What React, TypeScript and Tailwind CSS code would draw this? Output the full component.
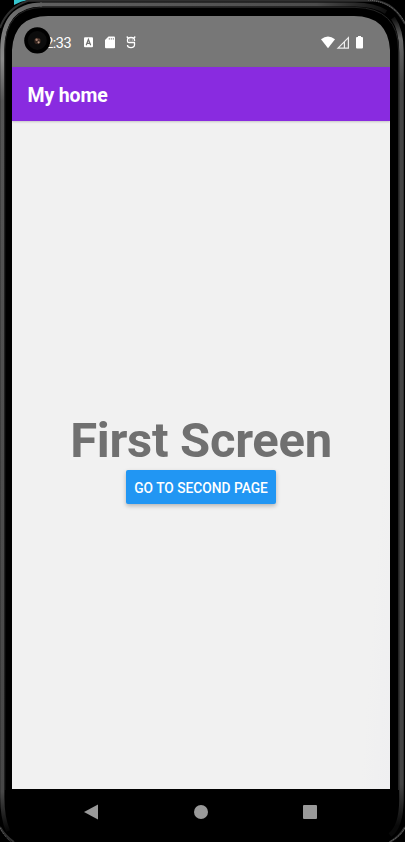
import React from "react";

function DeviceFrame() {
  return (
    <svg className="pointer-events-none absolute inset-0" width="405" height="842" viewBox="0 0 405 842" fill="none">
      <defs>
        <linearGradient id="leftRim" gradientUnits="userSpaceOnUse" x1="0" y1="0" x2="0" y2="842">
          <stop offset="0" stopColor="#606060" />
          <stop offset="0.03" stopColor="#777" />
          <stop offset="0.07" stopColor="#8a8a8a" />
          <stop offset="0.12" stopColor="#555" />
          <stop offset="0.94" stopColor="#484848" />
          <stop offset="0.985" stopColor="#080808" />
        </linearGradient>
        <linearGradient id="topRim" gradientUnits="userSpaceOnUse" x1="40" y1="0" x2="385" y2="0">
          <stop offset="0" stopColor="#606060" />
          <stop offset="0.8" stopColor="#4c4c4c" />
          <stop offset="1" stopColor="#111" />
        </linearGradient>
        <linearGradient id="rightRim" gradientUnits="userSpaceOnUse" x1="0" y1="18" x2="0" y2="842">
          <stop offset="0" stopColor="#111" />
          <stop offset="0.025" stopColor="#686868" />
          <stop offset="0.08" stopColor="#444" />
          <stop offset="0.93" stopColor="#444" />
          <stop offset="0.98" stopColor="#090909" />
        </linearGradient>
      </defs>
      <path fillRule="evenodd" fill="#000" d="M0 0H405V770H390V50Q388 16 354 16H48Q14 16 12 50V770H0Z" />
      <path d="M14 0H28Q21 1 14 5Z" fill="#36c5ce" />
      <path d="M0 28Q7 8 28 .8H376Q394 3 405 24M0 827Q5 836 14 842M405 827Q400 836 390 842" stroke="#303030" strokeWidth="2" />
      <path d="M8 831Q2.3 818 2.3 797V50Q2.3 5 42 4.5" stroke="url(#leftRim)" strokeWidth="4.2" />
      <path d="M40 4.5H355Q374 4.5 386 12" stroke="url(#topRim)" strokeWidth="4" />
      <path d="M393 18Q401.5 30 401.5 52V800Q401 827 390 835" stroke="url(#rightRim)" strokeWidth="4.5" />
      <path d="M4.8 790V50Q4.8 8 43 7.4H355Q398.5 8 398.5 50V790" stroke="#242424" strokeWidth="1" />
      <path d="M368 0Q394 2 405 23M0 828Q4 836 11 842M405 828Q400 837 389 842" stroke="#888" strokeWidth=".8" strokeDasharray="1 1" />
    </svg>
  );
}

function StatusBar() {
  return (
    <div className="relative h-[51px] shrink-0 bg-[#777]">
      <span className="absolute left-[25.5px] top-[18.5px] text-[14.5px] leading-[18px] tracking-[-0.5px] text-white">12:33</span>
      <svg className="absolute inset-0" width="378" height="51" viewBox="12 16 378 51" fill="#fff">
        <rect x="84" y="37.3" width="9" height="10" rx="1" />
        <path d="M86.2 45.2 88.4 39.5 90.7 45.2M87 43.3H90" fill="none" stroke="#707070" strokeWidth="1.2" />
        <path d="M108.5 36.5H114Q115 36.5 115 37.5V47.3Q115 48.3 114 48.3H106Q105 48.3 105 47.3V40Z" />
        <path d="M109.3 38V39.7M111.3 38V39.7M113.3 38V39.7" stroke="#888" strokeWidth=".9" />
        <path d="M134.5 41V40Q134.5 37.5 131 37.5T127.5 40V41.3Q127.5 42.5 129 42.5H135M134.5 42.5V44.8Q134.5 47.6 131 47.6Q127.5 47.6 127.5 45M126.8 36.5 128.2 38.3M135.2 36.5 133.8 38.3" fill="none" stroke="#fff" strokeWidth="1.3" />
        <path d="M129 40H130.4M131.7 40H133.1" stroke="#ddd" strokeWidth=".9" />
        <path d="M321 39.3Q328 33.5 335 39.3L328 48.2Z" />
        <path d="M338 48.2 348.4 37.7V48.2ZM344.4 42V48" fill="none" stroke="#eee" strokeWidth="1.2" />
        <path d="M356 38Q356 37 357 37H358V36H361V37H362Q363 37 363 38V47.5Q363 48.5 362 48.5H357Q356 48.5 356 47.5Z" />
      </svg>
    </div>
  );
}

function Camera() {
  return (
    <svg className="absolute left-6 top-[27px]" width="27" height="27" viewBox="0 0 27 27">
      <circle cx="13.3" cy="13.4" r="13.1" fill="#000" />
      <circle cx="13.3" cy="13.4" r="9.5" fill="#0c0c0c" />
      <circle cx="13.5" cy="14" r="3.2" fill="#35251f" />
      <circle cx="12.6" cy="12.8" r="1.2" fill="#a98270" />
      <circle cx="14.6" cy="15.3" r="1.1" fill="#b99a88" />
      <circle cx="15" cy="12.8" r=".8" fill="#62483e" />
    </svg>
  );
}

export default function App() {
  return (
    <div className="relative flex h-[842px] w-[405px] flex-col overflow-hidden bg-black pl-3 pr-[15px] pt-4 font-[Roboto,sans-serif]">
      <StatusBar />
      <header className="z-0 flex h-[54px] shrink-0 items-center bg-[#892be0] pl-[15.5px] pt-[4px] shadow-[0_1px_2px_rgba(0,0,0,0.18)]">
        <h1 className="text-[19.5px] font-bold leading-6 tracking-[-0.15px] text-white">My home</h1>
      </header>
      <main className="flex h-[668px] shrink-0 flex-col items-center bg-[linear-gradient(94deg,#f1f1f1_93%,#efeff1_100%)] pt-[290px]">
        <h2 className="whitespace-nowrap text-[49px] font-bold leading-[59px] tracking-[-0.3px] text-[#707070]">First Screen</h2>
        <button className="h-[34px] w-[150px] whitespace-nowrap rounded-[2px] bg-[#2196f3] pt-[2px] text-[13.75px] font-medium text-white shadow-[0_2px_4px_rgba(0,0,0,0.25)]">GO TO SECOND PAGE</button>
      </main>
      <nav className="flex h-[53px] shrink-0 items-start pt-[15px]">
        <svg className="ml-[71px] shrink-0" width="16" height="17" viewBox="0 0 16 17"><path d="M1 8 15 .5V15.5Z" fill="#999" /></svg>
        <div className="ml-[95px] mt-[1px] size-[14px] shrink-0 rounded-full bg-[#999]" />
        <div className="ml-[94.5px] mt-[1px] size-[14px] shrink-0 rounded-[1px] bg-[#999]" />
      </nav>
      <DeviceFrame />
      <Camera />
    </div>
  );
}
